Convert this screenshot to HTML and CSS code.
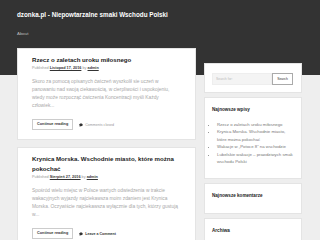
FILE: index.html
```html
<!DOCTYPE html>
<html lang="pl">
  <head>
    <meta charset="UTF-8" />
    <title>dzonka.pl - Niepowtarzalne smaki Wschodu Polski</title>
    <link rel="stylesheet" href="styles.css">
  </head>
  <body>
    <header class="site-header">
      <h1 class="site-title">dzonka.pl - Niepowtarzalne smaki Wschodu Polski</h1>
      <nav class="site-nav"><a href="#">About</a></nav>
    </header>

    <div class="page">
      <main class="content">
        <article class="post">
          <h2 class="post-title">Rzecz o zaletach uroku miłosnego</h2>
          <div class="post-meta">Published <a href="#">Listopad 17, 2016</a> by <a href="#">admin</a></div>
          <p class="excerpt">Skoro za pomocą opisanych ćwiczeń wyszkolił sie uczeń w<br>panowaniu nad swoją ciekawością, w cierpliwości i uspokojeniu,<br>wtedy może rozpocząć ćwiczenia Koncentracji myśli Każdy<br>człowiek...</p>
          <div class="post-footer">
            <a class="more" href="#">Continue reading</a>
            <span class="comments">
              <svg width="4" height="4" viewBox="0 0 10 10"><path d="M5 1C2.2 1 0.5 2.6 0.5 4.5c0 1 .5 1.9 1.4 2.5L1.4 9.3 4 7.9h1c2.8 0 4.5-1.6 4.5-3.4S7.8 1 5 1z" fill="#333"/></svg>
              Comments closed
            </span>
          </div>
        </article>

        <article class="post">
          <h2 class="post-title">Krynica Morska. Wschodnie miasto, które można pokochać</h2>
          <div class="post-meta">Published <a href="#">Sierpień 27, 2016</a> by <a href="#">admin</a></div>
          <p class="excerpt">Spośród wielu miejsc w Polsce wartych odwiedzenia w trakcie<br>wakacyjnych wyjazdy najciekawsza moim zdaniem jest Krynica<br>Morska. Oczywiście najciekawsza wyłącznie dla tych, którzy gustują<br>w...</p>
          <div class="post-footer">
            <a class="more" href="#">Continue reading</a>
            <span class="comments dark">
              <svg width="4" height="4" viewBox="0 0 10 10"><path d="M5 1C2.2 1 0.5 2.6 0.5 4.5c0 1 .5 1.9 1.4 2.5L1.4 9.3 4 7.9h1c2.8 0 4.5-1.6 4.5-3.4S7.8 1 5 1z" fill="#333"/></svg>
              Leave a Comment
            </span>
          </div>
        </article>
      </main>

      <aside class="sidebar">
        <section class="widget search-widget">
          <form class="search-form">
            <input type="search" placeholder="Search for:" />
            <button type="button">Search</button>
          </form>
        </section>
        <section class="widget">
          <h3 class="widget-title">Najnowsze wpisy</h3>
          <ul class="recent">
            <li>Rzecz o zaletach uroku miłosnego</li>
            <li>Krynica Morska. Wschodnie miasto, które można pokochać</li>
            <li>Wakacje w „Potoce 8” na wschodzie</li>
            <li>Lubelskie wakacje – prawdziwych smak wschodu Polski</li>
          </ul>
        </section>
        <section class="widget">
          <h3 class="widget-title">Najnowsze komentarze</h3>
        </section>
        <section class="widget">
          <h3 class="widget-title">Archiwa</h3>
        </section>
      </aside>
    </div>
  </body>
</html>
```

FILE: styles.css
```css
body {
  margin: 0;
  font-family: "Liberation Sans", Arial, sans-serif;
  background-color: #eeeeee;
  overflow: hidden;
}
a {
  color: inherit;
  text-decoration: none;
}
.site-header {
  background-color: #333333;
  height: 48px;
  box-sizing: border-box;
  padding: 11px 17px 0;
}
.site-title {
  margin: 0;
  font-size: 6.3px;
  line-height: 8px;
  font-weight: bold;
  color: #ffffff;
}
.site-nav {
  margin-top: 12px;
  font-size: 4.4px;
  line-height: 6px;
  color: #bbbbbb;
}
.page {
  display: flex;
  gap: 8px;
  padding: 0 18px 0 17px;
  background: linear-gradient(#333333 0, #333333 27px, #eeeeee 27px);
}
.content {
  width: 179px;
  flex-shrink: 0;
}
.sidebar {
  width: 98px;
  flex-shrink: 0;
  margin-top: 15px;
}
.post {
  background: #ffffff;
  border: 1px solid #e4e4e4;
  padding: 6px 11px 9px 14px;
  margin-bottom: 7px;
}
.post-title {
  margin: 0;
  font-size: 6.1px;
  line-height: 10px;
  font-weight: bold;
  color: #222222;
}
.post-meta {
  font-size: 3.8px;
  line-height: 6px;
  color: #999999;
}
.post-meta a {
  color: #333333;
  font-weight: bold;
  text-decoration: underline;
}
.excerpt {
  margin: 7px 0 0;
  font-size: 4.85px;
  line-height: 8px;
  color: #a8a8a8;
}
.post-footer {
  display: flex;
  align-items: center;
  gap: 6px;
  margin-top: 9px;
}
.more {
  border: 1px solid #cccccc;
  padding: 0 4px;
  height: 9px;
  line-height: 9px;
  font-size: 3.8px;
  font-weight: bold;
  color: #333333;
}
.comments {
  display: flex;
  align-items: center;
  gap: 2px;
  font-size: 3.6px;
  color: #999999;
}
.comments.dark {
  color: #333333;
  font-weight: bold;
}
.widget {
  background: #ffffff;
  border: 1px solid #e4e4e4;
  padding: 8px 7px 13px;
  margin-bottom: 4px;
}
.search-widget {
  padding: 9px 8px 7px 7px;
}
.search-form {
  display: flex;
  margin: 0;
}
.search-form input {
  width: 60px;
  height: 12px;
  box-sizing: border-box;
  border: 1px solid #eeeeee;
  background: #f4f4f4;
  padding: 0 3px;
  font-size: 3.4px;
  font-family: "Liberation Sans", Arial, sans-serif;
}
.search-form input::placeholder {
  color: #bbbbbb;
}
.search-form button {
  width: 21px;
  height: 12px;
  box-sizing: border-box;
  border: 1px solid #aaaaaa;
  background: #ffffff;
  padding: 0;
  font-size: 3.4px;
  font-family: "Liberation Sans", Arial, sans-serif;
  color: #333333;
}
.widget-title {
  margin: 0;
  font-size: 4.6px;
  line-height: 8px;
  font-weight: bold;
  color: #222222;
}
.recent {
  margin: 7px 0 0;
  padding-left: 5px;
  font-size: 4.3px;
  line-height: 7.4px;
  color: #777777;
}
```
